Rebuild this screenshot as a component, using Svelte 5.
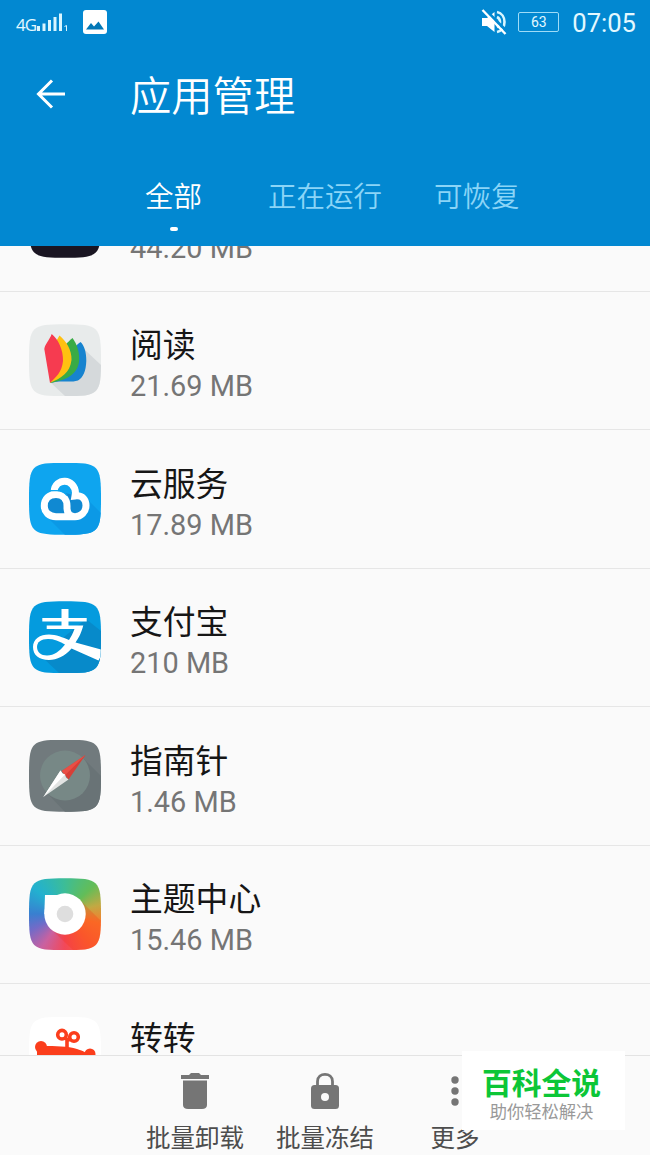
<script lang="ts">
  interface App {
    icon: string
    name: string
    size: string
  }

  const tabs = ['全部', '正在运行', '可恢复']
  let activeTab = $state(0)

  const apps: App[] = [
    { icon: 'dark', name: '', size: '44.20 MB' },
    { icon: 'reader', name: '阅读', size: '21.69 MB' },
    { icon: 'cloud', name: '云服务', size: '17.89 MB' },
    { icon: 'alipay', name: '支付宝', size: '210 MB' },
    { icon: 'compass', name: '指南针', size: '1.46 MB' },
    { icon: 'theme', name: '主题中心', size: '15.46 MB' },
    { icon: 'zhuan', name: '转转', size: '' }
  ]
</script>

<div class="screen">
  <header>
    <div class="status">
      <span class="network">4G</span>
      <svg class="signal" width="33" height="22" viewBox="0 0 33 22" fill="#d9f6ff">
        <rect x="1" y="15" width="3" height="5" />
        <rect x="6.5" y="12.5" width="3" height="7.5" />
        <rect x="12" y="9" width="3" height="11" />
        <rect x="17.5" y="6" width="3" height="14" />
        <rect x="23" y="2.5" width="3" height="17.5" />
        <path d="M28.500 15.500 L30.500 14.500 V20" fill="none" stroke="#d9f6ff" />
      </svg>
      <svg class="picture" width="26" height="26" viewBox="0 0 26 26">
        <rect x="1" y="1" width="24" height="24" rx="3" fill="#fff" />
        <path d="M4 20.500 L9 14 L12 17.500 L16.500 12.500 L22 20.500 Z" fill="#0277b6" />
      </svg>
      <svg class="mute" width="28" height="28" viewBox="0 0 28 28">
        <path d="M1 10 H6 L13.500 4 V24 L6 18 H1 Z" fill="#fff" />
        <path d="M16 9 C20 11 20 17 16 19 M16 4 C26 6 26 22 16 24" fill="none" stroke="#d9f6ff" stroke-width="2.600" />
        <path d="M3.500 1 L26.500 24" stroke="#0288d1" stroke-width="3" />
        <path d="M1.500 2 L24.500 26" stroke="#fff" stroke-width="2.400" />
      </svg>
      <span class="battery">63</span>
      <span class="clock">07:05</span>
    </div>

    <div class="title-bar">
      <svg width="32" height="32" viewBox="0 0 32 32" fill="none" stroke="#fff" stroke-width="3">
        <path d="M31 15 H5 M18 1.500 L4.500 15 L18 28.500" />
      </svg>
      <h1>应用管理</h1>
    </div>

    <nav>
      {#each tabs as tab, i}
        <button class="tab" class:active={i === activeTab} onclick={() => (activeTab = i)}>{tab}</button>
      {/each}
    </nav>
  </header>

  <main>
    <ul>
      {#each apps as app}
        <li>
          <div class="icon {app.icon}">
            {#if app.icon === 'reader'}
              <svg viewBox="0 0 72 72">
                <path d="M55 25 L72 41 V72 H36 L21 58 Z" fill="#d5d9db" />
                <path d="M21 59 L44 25 C46 22 49 20 51.500 18 C55 21 57.500 28 57.300 37 C57 47 54 54 49 56.500 C41 59 32 56 21 59 Z" fill="#1783cf" />
                <path d="M21 59 L36 21 C39 18 41 16 43.500 14 C48 20 51 29 50 38 C48 51 37 56 21 59 Z" fill="#39ab45" />
                <path d="M21 59 L26 19 C28 16 29 14 30.500 11.500 C37 17 43 26 42.500 36 C41 49 32 54 21 59 Z" fill="#ffc011" />
                <path d="M21 59 L15.300 25 C16 20 20 17 22.700 10 C29 15 34.500 26 34 37 C33 48 27 53 21 59 Z" fill="#f63b50" />
              </svg>
            {:else if app.icon === 'cloud'}
              <svg viewBox="0 0 72 72">
                <path d="M57 35 L72 50 V72 H36 L18 54 Z" fill="#0b99e6" />
                <path d="M23 30 H36 L54 34 L56 50 L46 54 H25 L16 48 Z" fill="#1089d2" />
                <g fill="none" stroke="#fff" stroke-width="7">
                  <path d="M25 29 C26 14 46 15 46.500 30 L46 33 C54 32 57 37 57 42.500 C57 49 52 53.700 46 53.700 C41 53.700 38 50 38 45 V43 C38 36 34 31.500 27 31.500 C20 31.500 15.300 36 15.300 43 C15.300 49 20 53.700 27 53.700 H46" />
                </g>
                <path d="M20.500 27.700 H28 C33 27.700 35.500 29.500 38 32.500" fill="none" stroke="#0ea5ef" stroke-width="1.300" />
              </svg>
            {:else if app.icon === 'alipay'}
              <svg viewBox="0 0 72 72">
                <path d="M57 18 L72 30 V72 H30 L12 55 Z" fill="#078aca" />
                <path d="M32.500 8 H39.500 V17 H57.700 V20.500 H39.500 V24.500 H54.300 C52 33 49 38 46.500 41.500 L72 48.500 V55 L69.500 59.500 L42.500 47.500 C36 55 28 59 20 59 C10 59 4 54 4 46 C4 38 11 33.500 20 33.500 C27 33.500 34 36.500 40 39 C42 36 44 32 45.500 28 H17.700 V24.500 H32.500 V20.500 H13.300 V17 H32.500 Z" fill="#fff" />
                <path d="M36 43.500 C30 40 25 38 19 38 C12 38 8 41 8 46 C8 51 12 54.500 18 54.500 C25 54.500 31 50 36 43.500 Z" fill="#049bde" />
              </svg>
            {:else if app.icon === 'compass'}
              <svg viewBox="0 0 72 72">
                <path d="M55 19 L72 36 V72 H36 L18 53 Z" fill="#697376" />
                <circle cx="36" cy="35.500" r="25" fill="#778886" />
                <path d="M56.500 15 L32.700 31 L39.500 39.500 Z" fill="#d83f37" />
                <path d="M56.500 15 L32.700 31 L36 35.200 Z" fill="#e94f46" />
                <path d="M14.300 57 L31.500 30.500 L33.500 33.500 L36 34.500 L37 37.500 L39.500 39.500 Z" fill="#e2e4e3" />
                <path d="M14.300 57 L31.500 30.500 L33.500 33.500 L36 34.500 Z" fill="#fff" />
              </svg>
            {:else if app.icon === 'theme'}
              <svg viewBox="0 0 72 72">
                <path d="M51 22 L72 43 V72 H44 L22 51 Z" fill="#f52d12" fill-opacity=".24" />
                <path d="M16 17 H36 V36 H15.300 Z" fill="#fff" />
                <circle cx="36" cy="36" r="20.700" fill="#fff" />
                <circle cx="36" cy="36" r="8.300" fill="#dedede" />
              </svg>
            {:else if app.icon === 'zhuan'}
              <svg viewBox="0 0 72 72">
                <g fill="#fb3e1c">
                  <circle cx="12" cy="30" r="6" />
                  <circle cx="61" cy="37" r="5.500" />
                  <path d="M8 42 V34 L14 29 C26 29 39 29 48 32 C52 33 57 36 66 39 V46 H8 Z" />
                </g>
                <g fill="none" stroke="#fb3e1c" stroke-width="3.600">
                  <circle cx="33" cy="17.700" r="4.300" />
                  <circle cx="45" cy="20" r="4.300" />
                  <path d="M36 21 L39 23 L42 22 M38 21.500 V31" />
                </g>
              </svg>
            {/if}
          </div>
          <div class="info">
            <span class="name">{app.name}</span>
            <span class="size">{app.size}</span>
          </div>
        </li>
      {/each}
    </ul>
  </main>

  <footer>
    <button class="action">
      <svg width="36" height="40" viewBox="0 0 36 40" fill="#757575">
        <path d="M4 4 H12 L14 2 H22 L24 4 H32 V8 H4 Z" />
        <path d="M6 9.500 H30 V34 C30 36.500 28 38 25 38 H11 C8 38 6 36.500 6 34 Z" />
      </svg>
      <span>批量卸载</span>
    </button>
    <button class="action">
      <svg width="36" height="40" viewBox="0 0 36 40">
        <path d="M10.500 15 V10.500 C10.500 1 25.500 1 25.500 10.500 V15" fill="none" stroke="#757575" stroke-width="2.800" />
        <rect x="4" y="14" width="28" height="24" rx="3.500" fill="#757575" />
        <circle cx="18" cy="26" r="4" fill="#fafafa" />
      </svg>
      <span>批量冻结</span>
    </button>
    <button class="action">
      <svg width="36" height="40" viewBox="0 0 36 40" fill="#757575">
        <circle cx="18" cy="9" r="3.700" />
        <circle cx="18" cy="20" r="3.700" />
        <circle cx="18" cy="31" r="3.700" />
      </svg>
      <span>更多</span>
    </button>
  </footer>

  <div class="badge">
    <strong>百科全说</strong>
    <span>助你轻松解决</span>
  </div>
</div>

<style>
  :global(body) {
    margin: 0;
  }

  .screen {
    position: relative;
    display: flex;
    flex-direction: column;
    width: 650px;
    height: 1155px;
    overflow: hidden;
    background: #fafafa;
    font-family: Roboto, 'Noto Sans CJK SC', sans-serif;
  }

  button {
    padding: 0;
    border: 0;
    background: none;
    font: inherit;
  }

  svg {
    display: block;
    flex: none;
  }

  header {
    flex: none;
    height: 245.500px;
    background: #0288d1;
    color: #fff;
  }

  .status {
    display: flex;
    align-items: center;
    height: 44px;
    padding: 0 14px 0 16px;
    color: #e3f8ff;
  }

  .network {
    margin-top: 6px;
    font: 17px/20px 'Open Sans', sans-serif;
    letter-spacing: -1px;
  }

  .picture {
    margin-left: 13px;
  }

  .mute {
    margin-left: auto;
  }

  .battery {
    box-sizing: border-box;
    width: 41px;
    height: 20px;
    margin: 0 13px 0 9px;
    border: 1px solid #9fdcf7;
    border-radius: 2px;
    font-size: 14px;
    line-height: 19px;
    text-align: center;
  }

  .clock {
    padding-top: 1px;
    font-size: 25.600px;
    line-height: 30px;
  }

  .title-bar {
    display: flex;
    align-items: center;
    gap: 64px;
    height: 101px;
    padding-left: 34px;
  }

  h1 {
    margin: 4px 0 0;
    font-size: 41.300px;
    font-weight: 350;
    line-height: 60px;
  }

  nav {
    display: flex;
    gap: 66px;
    padding-left: 145px;
  }

  .tab {
    display: flex;
    flex-direction: column;
    align-items: center;
    height: 100px;
    padding-top: 33px;
    box-sizing: border-box;
    color: #8bd5f7;
    font-size: 28.500px;
    font-weight: 350;
    line-height: 40px;
  }

  .tab:last-child {
    margin-left: -14px;
  }

  .tab.active {
    color: #fff;
  }

  .tab.active::after {
    content: '';
    width: 8px;
    height: 4px;
    margin-top: 9px;
    border-radius: 2px;
    background: #fff;
  }

  main {
    flex: 1;
    min-height: 0;
    overflow: hidden;
  }

  ul {
    margin: -92.500px 0 0;
    padding: 0;
    list-style: none;
  }

  li {
    display: flex;
    align-items: center;
    gap: 29px;
    box-sizing: border-box;
    height: 138.500px;
    padding-left: 29px;
    border-bottom: 1px solid #e6e6e6;
  }

  .icon {
    width: 72px;
    height: 72px;
    clip-path: path('M0 36 C0 2 2 0 36 0 S72 2 72 36 70 72 36 72 0 70 0 36 Z');
  }

  .dark {
    background: #1a1522;
  }

  .reader {
    background: #e8ebeb;
  }

  .cloud {
    background: #0ea5ef;
  }

  .alipay {
    background: #049bde;
  }

  .compass {
    background: #717a7d;
  }

  .theme {
    background: conic-gradient(#3dbd96, #63bd58 45deg, #c1a943 75deg, #fb7a2b 105deg, #fc6333 140deg, #f34858 180deg, #c961a0 215deg, #716bc8 245deg, #397fd0 270deg, #22b1d0 310deg, #3dbd96);
  }

  .zhuan {
    background: #fff;
  }

  .info {
    display: flex;
    flex-direction: column;
    padding-top: 9px;
  }

  .name {
    height: 43px;
    color: #161616;
    font-size: 32.800px;
    line-height: 44px;
  }

  .size {
    height: 38px;
    color: #757575;
    font-size: 28.900px;
    line-height: 38px;
  }

  footer {
    display: flex;
    flex: none;
    box-sizing: border-box;
    height: 100px;
    padding-left: 130px;
    border-top: 1px solid #e3e3e3;
    background: #fafafa;
  }

  .action {
    display: flex;
    flex-direction: column;
    align-items: center;
    width: 130px;
    padding-top: 15px;
    color: #4d4d4d;
    font-size: 24.500px;
    line-height: 36px;
  }

  .action span {
    margin-top: 10px;
  }

  /* floats over the bottom bar */
  .badge {
    position: absolute;
    right: 25px;
    bottom: 25px;
    display: flex;
    flex-direction: column;
    align-items: center;
    box-sizing: border-box;
    width: 163px;
    height: 79px;
    padding: 14px 4px 0 0;
    background: #fff;
  }

  .badge strong {
    color: #0cc637;
    font-size: 29.800px;
    font-weight: 700;
    line-height: 38px;
  }

  .badge span {
    color: #999;
    font-size: 17.300px;
    line-height: 18px;
  }
</style>
